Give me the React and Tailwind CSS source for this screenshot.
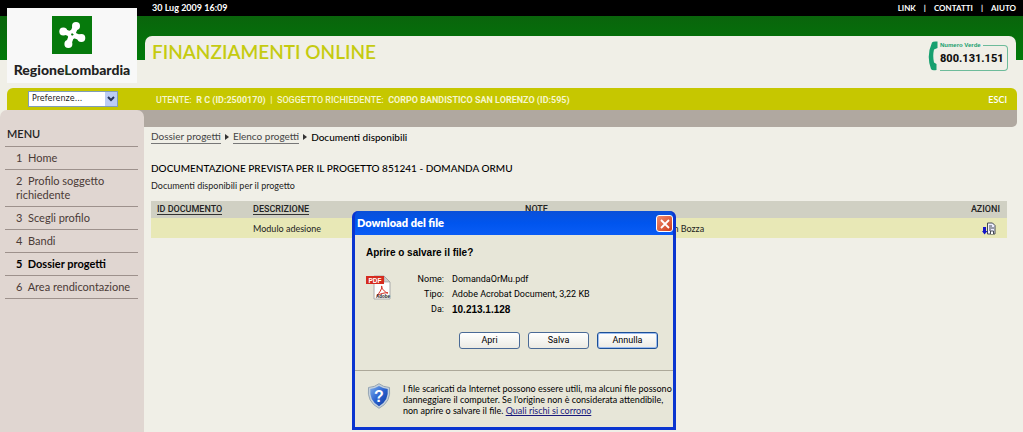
import { useState } from 'react';

const menu = ['Home', 'Profilo soggetto richiedente', 'Scegli profilo', 'Bandi', 'Dossier progetti', 'Area rendicontazione'];

const fileInfo = [
  { label: 'Nome:', value: 'DomandaOrMu.pdf' },
  { label: 'Tipo:', value: 'Adobe Acrobat Document, 3,22 KB' },
  { label: 'Da:', value: '10.213.1.128', bold: true },
];

function Logo() {
  return (
    <div className="ml-[7px] mt-2 flex h-[75px] w-[130px] shrink-0 flex-col items-center bg-[#f8f8f8] pt-2">
      <svg viewBox="0 0 40 38" className="h-[38px] w-10" aria-hidden="true">
        <rect width="40" height="38" fill="#067a0c" />
        <path d="M20 18.500 24 10M20 18.500 11.500 15.500M20 18.500 16.500 28M20 18.500 29 22" stroke="#fff" strokeWidth="5.500" />
        <g fill="#fff">
          <circle cx="24" cy="10" r="4" />
          <circle cx="11.300" cy="15.500" r="4" />
          <circle cx="16.400" cy="28" r="4" />
          <circle cx="29.300" cy="22" r="4" />
          <circle cx="20" cy="18.500" r="4.500" />
        </g>
        <path d="m20 17 1.800 1.800-1.800 1-1-1.300z" fill="#067a0c" />
      </svg>
      <div className="mt-2 font-['Lato',sans-serif] text-sm leading-4 font-black text-[#222]">
        Regione<span className="text-[#1c3a1c]">L</span>ombardia
      </div>
    </div>
  );
}

function GreenNumber() {
  return (
    <div className="flex items-center">
      <svg viewBox="0 0 10 30" className="h-[30px] w-[10px]" aria-hidden="true">
        <path d="M4 1.500Q5 0 9.500 .500V7L6 8.500Q4.500 15 6 21.500L8.500 23V29Q4 30 3 28Q-2 15 4 1.500z" fill="#17a06f" />
      </svg>
      <div className="relative ml-[2px] mt-1 h-[26px] w-[68px] rounded-r-[4px] border border-l-0 border-[#6dbb9a]">
        <span className="absolute -top-[6px] left-0 bg-[#f0efe7] pr-[2px] font-['Liberation_Sans',sans-serif] text-[6px] leading-[10px] font-bold text-[#17a06f]">
          Numero Verde
        </span>
        <span className="block font-['Roboto',sans-serif] text-[11px] leading-[26px] font-extrabold text-[#111]">800.131.151</span>
      </div>
    </div>
  );
}

function PdfIcon() {
  return (
    <svg viewBox="0 0 25 25" className="size-[25px]" aria-hidden="true">
      <path d="M8 1h10l6 6v17H8z" fill="#fdfdfd" stroke="#aaa" />
      <path d="M18 1v6h6z" fill="#ccc" stroke="#999" strokeWidth=".6" />
      <rect y="1" width="18" height="8" fill="#d52b1e" />
      <text x="9" y="7.500" textAnchor="middle" fontSize="6.500" fontWeight="bold" fill="#fff" fontFamily="Liberation Sans">PDF</text>
      <path d="M15.500 11c1.500 0-1 6-4.500 9.500 2-1 8-3.500 11-2.500-4-1-6.500-5-6.500-7z" fill="none" stroke="#d52b1e" />
      <text x="17" y="22.500" textAnchor="middle" fontSize="4.500" fontWeight="bold" fill="#222" fontFamily="Liberation Sans">Adobe</text>
    </svg>
  );
}

function ShieldIcon() {
  return (
    <svg viewBox="0 0 24 26" className="h-[26px] w-6 shrink-0" aria-hidden="true">
      <defs>
        <linearGradient id="shield" x1="0" y1="0" x2="1" y2="1">
          <stop offset="0" stopColor="#7fb0ec" />
          <stop offset=".5" stopColor="#2a62cf" />
          <stop offset="1" stopColor="#123a9e" />
        </linearGradient>
      </defs>
      <path d="M12 .7Q16 4 22.500 4.500 24.500 19 12 25.300-.500 19 1.500 4.500 8 4 12 .7z" fill="#c3d0dd" stroke="#8798aa" strokeWidth=".8" />
      <path d="M12 3Q16 5.500 20.700 6 22 17.500 12 23.300 2 17.500 3.300 6 8 5.500 12 3z" fill="url(#shield)" />
      <text x="12" y="19" textAnchor="middle" fontSize="16" fontWeight="bold" fill="#fff" fontFamily="Liberation Sans">?</text>
    </svg>
  );
}

function DownloadIcon() {
  return (
    <svg viewBox="0 0 14 13" className="h-[13px] w-[14px]" aria-hidden="true">
      <path d="M5.500 1h5L13 3.500V12H5.500z" fill="#eef" stroke="#444a55" />
      <path d="M7 4h3M7 6h5M7 8h2" stroke="#444a55" />
      <path d="M8.500 12V9h3v3" fill="#fff" stroke="#444a55" />
      <path d="M1 5h3v4h1.500l-3 3.500L0 9h1z" fill="#1414c8" />
    </svg>
  );
}

function DownloadDialog({ onClose }) {
  const button = 'h-[17px] w-[61px] rounded-[3px] border bg-linear-to-b from-white to-[#ecebe4] leading-[15px]';

  return (
    <div
      role="dialog"
      aria-labelledby="dialog-title"
      className="absolute top-[211px] left-[352px] w-[324px] rounded-t-[6px] border-[3px] border-t-0 border-[#0a35d0] bg-[#0a35d0] font-['Roboto',sans-serif] text-[9px] text-black"
    >
      <div className="flex h-6 items-center justify-between rounded-t-[5px] bg-linear-to-b from-[#0a50d8] via-[#0055ee] to-[#0a5cf5] pt-px pl-[2px]">
        <h2 id="dialog-title" className="font-['Lato',sans-serif] text-[11px] font-extrabold text-white">Download del file</h2>
        <button
          aria-label="Chiudi"
          onClick={onClose}
          className="flex size-[17px] items-center justify-center rounded-[3px] border border-white bg-linear-to-br from-[#ee8a6c] to-[#cc3a16]"
        >
          <svg viewBox="0 0 10 10" className="size-[10px]" aria-hidden="true">
            <path d="m1 1 8 8M9 1 1 9" stroke="#fff" strokeWidth="1.800" />
          </svg>
        </button>
      </div>
      <div className="bg-[#e7e6d8]">
        <div className="px-[11px] pt-[11px] pb-[21px]">
          <p className="font-['Liberation_Sans',sans-serif] text-[10px] leading-[14px] font-bold">Aprire o salvare il file?</p>
          <div className="mt-3 flex">
            <div className="pt-[3px]">
              <PdfIcon />
            </div>
            <dl className="grid grid-cols-[53px_1fr] gap-x-2 leading-[15px]">
              {fileInfo.map((f) => (
                <div key={f.label} className="contents">
                  <dt className="text-right">{f.label}</dt>
                  <dd className={f.bold ? "font-['Liberation_Sans',sans-serif] text-[10px] font-bold" : ''}>{f.value}</dd>
                </div>
              ))}
            </dl>
          </div>
          <div className="mt-[15px] flex justify-end gap-2 pr-1">
            <button className={`${button} border-[#4a6a96]`}>Apri</button>
            <button className={`${button} border-[#4a6a96]`}>Salva</button>
            <button onClick={onClose} className={`${button} border-[#1c4f96] ring-1 ring-[#9dbdf0] ring-inset`}>Annulla</button>
          </div>
        </div>
        <div className="flex items-start gap-3 border-t border-[#aca899] pt-3 pb-[11px] pl-3">
          <ShieldIcon />
          <p className="font-['Lato',sans-serif] leading-[11px]">
            I file scaricati da Internet possono essere utili, ma alcuni file possono danneggiare il computer. Se l'origine non è
            considerata attendibile, non aprire o salvare il file.{' '}
            <a href="#rischi" className="text-[#1a1a7c] underline">Quali rischi si corrono</a>
          </p>
        </div>
      </div>
    </div>
  );
}

export default function App() {
  const [open, setOpen] = useState(true);

  return (
    <div className="relative flex min-h-screen flex-col bg-[#f0efe7] font-['Lato',sans-serif] text-[11px] text-[#222]">
      <header className="flex bg-[linear-gradient(to_bottom,#000_16px,#0a640c_16px,#007a08_60px,#f0efe7_60px)]">
        <Logo />
        <div className="ml-2 flex-1 pb-2">
          <div className="flex h-4 items-center justify-between pr-[7px] pl-[7px] text-[9px] font-bold text-white">
            <span>30 Lug 2009 16:09</span>
            <nav className="flex gap-2 text-[8px]">
              <a href="#link">LINK</a>
              <span>|</span>
              <a href="#contatti">CONTATTI</a>
              <span>|</span>
              <a href="#aiuto">AIUTO</a>
            </nav>
          </div>
          <div className="mt-5 mr-[7px] flex h-11 items-start justify-between rounded-t-[7px] bg-[#f0efe7] pt-[5px] pr-2 pl-[7px]">
            <h1 className="text-[19px] leading-[22px] font-semibold text-[#c5cb10]">FINANZIAMENTI ONLINE</h1>
            <GreenNumber />
          </div>
        </div>
      </header>

      <div className="mr-[6px] ml-[7px] flex h-[22px] items-center rounded-t-[6px] bg-[#c6c700] text-[9px] text-[#f6f6cc]">
        <div className="relative ml-[21px] h-4 w-[90px]">
          <select
            aria-label="Preferenze"
            className="block h-4 w-full appearance-none border border-[#7f9db9] bg-white pl-[3px] font-['DejaVu_Sans',sans-serif] text-[8px] text-[#222]"
          >
            <option>Preferenze...</option>
          </select>
          <span className="pointer-events-none absolute top-px right-px flex h-[14px] w-3 items-center justify-center bg-[#bccdf5]">
            <svg viewBox="0 0 8 6" className="h-[6px] w-2" aria-hidden="true">
              <path d="m1 1 3 3 3-3" fill="none" stroke="#26355c" strokeWidth="2" />
            </svg>
          </span>
        </div>
        <p className="ml-[38px] flex-1 pt-1 font-['Roboto',sans-serif] font-medium">
          UTENTE: &nbsp;<b>R C (ID:2500170)</b> &nbsp;|&nbsp; SOGGETTO RICHIEDENTE: &nbsp;<b>CORPO BANDISTICO SAN LORENZO (ID:595)</b>
        </p>
        <a href="#esci" className="pt-[2px] pr-[10px] font-semibold text-white">ESCI</a>
      </div>

      <div className="flex flex-1">
        <div className="flex w-36 shrink-0 bg-[linear-gradient(to_right,#f0efe7_50%,#b0a8a0_50%)]">
          <aside className="flex-1 rounded-t-[7px] bg-[#e0d6d1] pr-[6px] pl-[5px]">
            <h2 className="border-b border-[#9d918c] pt-4 pb-1 pl-[2px] text-[11px] leading-4 font-semibold text-[#222]">MENU</h2>
            <ol>
              {menu.map((item, i) => (
                <li key={item} className="border-b border-[#9d918c] py-1 pl-[11px] leading-[14px]">
                  <a href={`#menu-${i + 1}`} className={i === 4 ? 'block font-bold text-black' : 'block text-[#4a3a36]'}>
                    {`${i + 1}\u00a0 ${item}`}
                  </a>
                </li>
              ))}
            </ol>
          </aside>
        </div>

        <main className="min-w-0 flex-1">
          <div className="mr-[6px] h-[17px] rounded-br-[5px] bg-[#b0a8a0]" />
          <div className="pr-4 pl-[7px]">
            <nav className="flex items-center pt-[2px] text-[10px] leading-[14px]">
              <a href="#dossier" className="border-b border-[#777] text-[#444]">Dossier progetti</a>
              <span className="mx-1 border-y-[3px] border-l-4 border-y-transparent border-l-[#333]" />
              <a href="#elenco" className="border-b border-[#777] text-[#444]">Elenco progetti</a>
              <span className="mx-1 border-y-[3px] border-l-4 border-y-transparent border-l-[#333]" />
              <span className="font-medium text-black">Documenti disponibili</span>
            </nav>
            <h2 className="mt-4 text-[10px] leading-4 font-medium text-black">DOCUMENTAZIONE PREVISTA PER IL PROGETTO 851241 - DOMANDA ORMU</h2>
            <p className="mt-[3px] text-[9px] leading-[14px]">Documenti disponibili per il progetto</p>
            <table className="mt-2 w-full table-fixed text-left text-[9px]">
              <colgroup>
                <col className="w-24" />
                <col className="w-[272px]" />
                <col className="w-36" />
                <col />
                <col className="w-20" />
              </colgroup>
              <thead className="font-['Roboto',sans-serif]">
                <tr className="h-[17px] bg-[#d0d0c3]">
                  <th className="pl-[6px] font-medium"><a href="#id" className="border-b border-[#333]">ID DOCUMENTO</a></th>
                  <th className="pl-[6px] font-medium"><a href="#descrizione" className="border-b border-[#333]">DESCRIZIONE</a></th>
                  <th className="pl-[6px] font-medium">NOTE</th>
                  <th></th>
                  <th className="pr-[7px] text-right font-medium">AZIONI</th>
                </tr>
              </thead>
              <tbody>
                <tr className="h-5 bg-[#e8e8b6]">
                  <td></td>
                  <td className="pt-[2px] pl-[6px]">Modulo adesione</td>
                  <td></td>
                  <td className="pt-[2px] pl-2">In Bozza</td>
                  <td className="pr-[11px]">
                    <button aria-label="Scarica" onClick={() => setOpen(true)} className="ml-auto block">
                      <DownloadIcon />
                    </button>
                  </td>
                </tr>
              </tbody>
            </table>
          </div>
        </main>
      </div>

      {open && <DownloadDialog onClose={() => setOpen(false)} />}
    </div>
  );
}
